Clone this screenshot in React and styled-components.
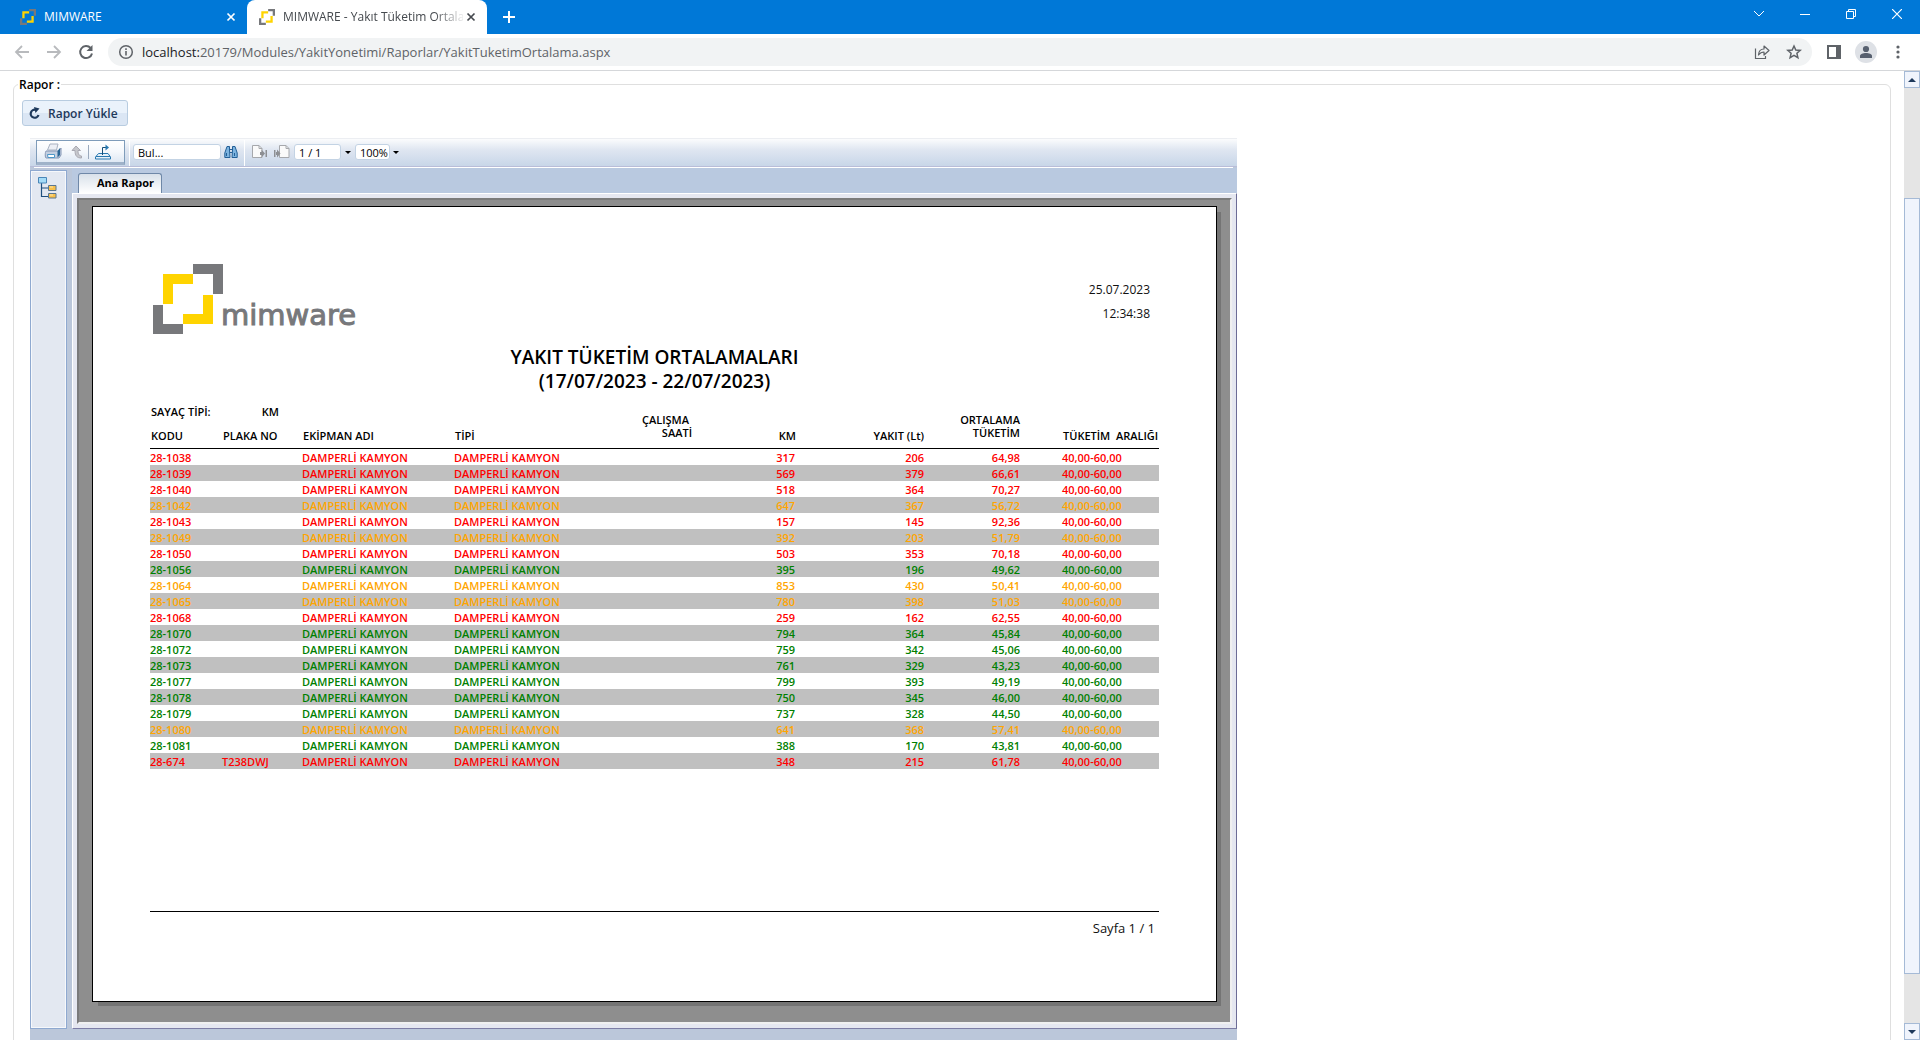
import React from 'react';
import styled, { createGlobalStyle, css } from 'styled-components';

const GlobalStyle = createGlobalStyle`
  * { box-sizing: border-box; }
  html, body { margin: 0; height: 100%; }
  #root { height: 100%; }
  body, button, input, select {
    font-family: "Open Sans", "Noto Sans", "Liberation Sans", sans-serif;
    font-size: 12px;
  }
`;

const Window = styled.div`
  display: flex;
  flex-direction: column;
  height: 100vh;
  overflow: hidden;
  background: #fff;
`;

const BareButton = styled.button`
  display: flex;
  align-items: center;
  justify-content: center;
  flex: none;
  width: ${(p) => p.$w || 16}px;
  height: ${(p) => p.$h || 16}px;
  padding: 0;
  border: 0;
  background: none;
  color: inherit;
`;

/* ---------- browser chrome ---------- */

const TabStrip = styled.header`
  display: flex;
  flex: none;
  height: 34px;
  background: #0078d7;
  color: #fff;
`;

const BrowserTab = styled.div`
  display: flex;
  align-items: center;
  height: 34px;
  padding: 0 8px 0 12px;
  width: 240px;
  ${(p) =>
    p.$active
      ? css`
          background: #fff;
          color: #45494e;
          border-radius: 8px 8px 0 0;
        `
      : css`
          margin-left: 8px;
          width: 239px;
        `}
`;

const BrowserTabTitle = styled.span`
  flex: 1;
  min-width: 0;
  margin: 0 0 0 8px;
  overflow: hidden;
  white-space: nowrap;
  line-height: 16px;
  ${(p) => p.$fade && css`mask-image: linear-gradient(to right, #000 84%, rgba(0, 0, 0, 0.1));`}
`;

const StripSpacer = styled.div`
  flex: 1;
`;

const WindowButtons = styled.div`
  display: flex;
  height: 28px;
`;

const NavBar = styled.nav`
  display: flex;
  align-items: center;
  flex: none;
  height: 37px;
  padding: 4px 6px;
  border-bottom: 1px solid #d5d7da;
  color: #5f6368;
`;

const AddressBar = styled.div`
  display: flex;
  align-items: center;
  flex: 1;
  height: 28px;
  margin: 0 6px;
  padding: 0 2px 0 10px;
  border-radius: 14px;
  background: #f1f3f4;
`;

const Url = styled.span`
  flex: 1;
  margin-left: 8px;
  font-size: 13px;
  line-height: 20px;
  color: #5f6368;
  b { font-weight: 400; color: #202124; }
`;

const Avatar = styled.span`
  display: flex;
  align-items: center;
  justify-content: center;
  width: 22px;
  height: 22px;
  border-radius: 50%;
  background: #dee1e6;
`;

/* ---------- page and scroll bar ---------- */

const Viewport = styled.div`
  display: flex;
  flex: 1;
  min-height: 0;
`;

const Content = styled.main`
  flex: 1;
  min-width: 0;
  overflow: hidden;
  padding: 4px 13px 0;
`;

const ScrollTrack = styled.div`
  display: flex;
  flex-direction: column;
  flex: none;
  width: 16px;
  background: #e5e5e5;
`;

const ScrollArrow = styled(BareButton)`
  width: 16px;
  height: 17px;
  border: 1px solid #a5bad6;
  background: #f0f4fc;
`;

const ScrollGap = styled.div`
  flex: ${(p) => p.$grow};
`;

const ScrollThumb = styled.div`
  flex: 776;
  border: 1px solid #a5bad6;
  background: #f0f4fc;
`;

const ReportSet = styled.fieldset`
  margin: 0;
  min-width: 0;
  height: 1200px;
  padding: 7px 8px 0;
  border: 1px solid #dfdfdf;
  border-radius: 6px;
  legend {
    padding: 2px 1px 0;
    margin-left: -4px;
    font-size: 12px;
    line-height: 16px;
    font-weight: 600;
    color: #000;
  }
`;

const LoadButton = styled.button`
  display: flex;
  align-items: center;
  gap: 8px;
  height: 26px;
  padding: 0 9px 0 5px;
  border: 1px solid #b8cce0;
  border-radius: 3px;
  background: linear-gradient(#eaf2fb 0 48%, #dbe6f4 52% 100%);
  color: #1e395b;
  font-size: 12px;
  font-weight: 600;
`;

/* ---------- report viewer ---------- */

const Viewer = styled.section`
  width: 1207px;
  margin: 12px 0 0 8px;
  height: 1060px;
  background: #bbc7da;
`;

const ViewerToolbar = styled.div`
  display: flex;
  align-items: flex-start;
  height: 29px;
  padding: 1px 6px 0;
  border-top: 1px solid #eceef2;
  border-bottom: 1px solid #b9bdd8;
  background: linear-gradient(#fbfcfd, #dfe6f1 40%, #c8d6e8);
`;

const ExportGroup = styled.div`
  display: flex;
  align-items: center;
  width: 89px;
  height: 25px;
  padding: 0 6px 0 7px;
  border: 1px solid #7f9cba;
  border-bottom: 3px solid #9fb2c9;
  background: linear-gradient(#fff, #f5f8fc 50%, #dfe8f4);
`;

const ToolDivider = styled.span`
  flex: none;
  width: 1px;
  height: ${(p) => p.$h || 26}px;
  margin: ${(p) => p.$m || '0 3px 0 4px'};
  background: ${(p) => p.$color || '#fff'};
`;

const Tool = styled(BareButton)`
  width: ${(p) => p.$w || 18}px;
  height: 20px;
  margin: ${(p) => p.$m || '2px 0 0'};
`;

const ToolInput = styled.input`
  width: ${(p) => p.$w}px;
  height: 16px;
  margin-top: 4px;
  padding: 0 0 0 4px;
  border: 1px solid #c3d3e4;
  border-radius: 3px;
  background: #fff;
  color: #000;
  font-size: 11px;
  line-height: 14px;
  &::placeholder { color: #000; opacity: 1; }
`;

const ViewerBody = styled.div`
  display: flex;
  height: 862px;
  background: linear-gradient(#fff, #fff) 4px 0 / calc(100% - 8px) 1px no-repeat;
`;

const GroupPanel = styled.aside`
  width: 37px;
  margin: 3px 5px 0 0;
  padding: 4px 0 0 5px;
  border: 1px solid #8fa9d0;
  box-shadow: inset 0 0 0 1px #f6f8fb;
  background: #e3e8f1;
`;

const ReportColumn = styled.div`
  display: flex;
  flex-direction: column;
  flex: 1;
  min-width: 0;
  margin-top: 1px;
  background: #b9c9e0;
`;

const ReportTabs = styled.div`
  display: flex;
  align-items: flex-end;
  height: 25px;
  padding-left: 6px;
`;

const ReportTab = styled.button`
  height: 20px;
  padding: 0 7px 2px 18px;
  border: 1px solid #6f88a8;
  border-bottom: 0;
  border-radius: 3px 3px 0 0;
  background: linear-gradient(#d9e1ea, #fff);
  color: #000;
  font-size: 11px;
  line-height: 16px;
  font-weight: 700;
`;

const Frame = styled.div`
  flex: 1;
  padding: 4px;
  border: 1px solid;
  border-color: #fff #6c6c96 #7d7da5 #fff;
  background: #e5e7f0;
`;

const Desk = styled.div`
  height: 100%;
  padding: 6px 13px 0;
  border: 2px solid;
  border-color: #7b7b7b #f0f0f0 #f0f0f0 #7b7b7b;
  background: #8e8e8e;
`;

const Paper = styled.article`
  display: flex;
  flex-direction: column;
  width: 1125px;
  height: 796px;
  padding: 57px 57px 0;
  border: 1px solid #000;
  background: #fff;
  box-shadow: 5px 5px 0 -1px #747474;
`;

const PaperHead = styled.div`
  display: flex;
  justify-content: space-between;
  height: 72px;
  padding: 0 9px 0 3px;
`;

const Logo = styled.div`
  display: flex;
  align-items: flex-end;
  padding-bottom: 2px;
`;

const Wordmark = styled.span`
  margin: 0 0 3px -2px;
  font-family: "DejaVu Sans", sans-serif;
  font-size: 29px;
  line-height: 32px;
  color: #77787b;
  -webkit-text-stroke: 1px #77787b;
`;

const Stamp = styled.div`
  padding-top: 14px;
  text-align: right;
  line-height: 24px;
  color: #111;
`;

const Title = styled.h1`
  margin: 9px 0 0;
  text-align: center;
  font-size: 19px;
  line-height: 24px;
  font-weight: 600;
  color: #000;
`;

const Meter = styled.dl`
  display: flex;
  gap: 51px;
  margin: 12px 0 -6px;
  padding-left: 1px;
  font-size: 11px;
  line-height: 14px;
  font-weight: 600;
  dt, dd { margin: 0; }
`;

const ReportTable = styled.table`
  width: 1009px;
  table-layout: fixed;
  border-collapse: separate;
  border-spacing: 0;
  font-size: 11px;
  line-height: 13px;
  font-weight: 600;
`;

const HeadCell = styled.th`
  padding: 0 0 6px ${(p) => p.$indent || 1}px;
  border-bottom: 1px solid #000;
  vertical-align: bottom;
  text-align: ${(p) => p.$align || 'left'};
  font-weight: 600;
  white-space: pre;
`;

const StackedHead = styled(HeadCell)`
  padding-bottom: 9px;
`;

const StackedLine = styled.span`
  display: block;
  padding-right: ${(p) => p.$shift || 0}px;
`;

const TONES = { red: '#ff0000', orange: '#ffa500', green: '#008000' };

const DataRow = styled.tr`
  height: 16px;
  color: ${(p) => TONES[p.$tone]};
  &:nth-child(even) { background: #c0c0c0; }
`;

const Cell = styled.td`
  padding: 0 ${(p) => p.$end || 0}px 0 ${(p) => p.$indent || 0}px;
  text-align: ${(p) => p.$align || 'left'};
  white-space: nowrap;
`;

const PaperFoot = styled.footer`
  margin-top: 142px;
  padding: 4px 4px 0 0;
  border-top: 1px solid #000;
  text-align: right;
  font-size: 13px;
  line-height: 24px;
  color: #111;
`;

/* ---------- drawings ---------- */

function Mark({ size }) {
  return (
    <svg width={size} height={size} viewBox="0 0 70 70" aria-hidden="true">
      <path fill="#77787b" d="M40 0H70V30H60V10H40Z" />
      <path fill="#ffd400" d="M10 10H40V20H20V40H10Z" />
      <path fill="#ffd400" d="M50 31H60V60H30V50H50Z" />
      <path fill="#77787b" d="M0 41H10V60H30V70H0Z" />
    </svg>
  );
}

function Svg({ w = 16, h = w, children, ...rest }) {
  return (
    <svg width={w} height={h} viewBox={`0 0 ${w} ${h}`} fill="none" stroke="currentColor" aria-hidden="true" {...rest}>
      {children}
    </svg>
  );
}

const CloseIcon = () => (
  <Svg strokeWidth="1.7"><path d="M4.5 4.5l7 7M11.5 4.5l-7 7" /></Svg>
);
const PlusIcon = () => (
  <Svg strokeWidth="2"><path d="M8 2v12M2 8h12" /></Svg>
);
const BackIcon = () => (
  <Svg strokeWidth="1.8" color="#b8babd"><path d="M15 8H2M8 2L2 8l6 6" /></Svg>
);
const ForwardIcon = () => (
  <Svg strokeWidth="1.8" color="#b8babd"><path d="M1 8h13M8 2l6 6-6 6" /></Svg>
);
const ReloadIcon = () => (
  <Svg strokeWidth="2"><path d="M12.6 4A6 6 0 1 0 14 9.5" /><path d="M14.5 1v6h-6z" fill="currentColor" stroke="none" /></Svg>
);
const InfoIcon = () => (
  <Svg strokeWidth="1.5"><circle cx="8" cy="8" r="6.3" /><path d="M8 7v4.5M8 4.3v1.6" strokeWidth="1.6" /></Svg>
);
const ShareIcon = () => (
  <Svg strokeWidth="1.2">
    <path d="M1.5 4.5v10h10V12" />
    <path d="M4.5 11c.2-4 2-6 5.5-6V2l5 4.5-5 4.5V8C7.5 8 6 9 4.5 11z" strokeLinejoin="round" />
  </Svg>
);
const StarIcon = () => (
  <Svg strokeWidth="1.5"><path d="M8 2l1.800 4 4.400.400-3.300 2.900 1 4.300L8 11.300l-3.900 2.300 1-4.300-3.300-2.900 4.400-.400z" /></Svg>
);
const PanelIcon = () => (
  <Svg strokeWidth="2"><rect x="2" y="2" width="12" height="12" /><path d="M10 2h4v12h-4z" fill="currentColor" stroke="none" /></Svg>
);
const PersonIcon = () => (
  <Svg w={14} color="#57606f" fill="currentColor" stroke="none">
    <circle cx="7" cy="4" r="3.1" /><path d="M1 13v-2c0-2 3-3 6-3s6 1 6 3v2z" />
  </Svg>
);
const DotsIcon = () => (
  <Svg fill="currentColor" stroke="none"><circle cx="8" cy="3" r="1.6" /><circle cx="8" cy="8" r="1.6" /><circle cx="8" cy="13" r="1.6" /></Svg>
);
const ChevronIcon = () => (
  <Svg w={12}><path d="M1 3l5 5 5-5" /></Svg>
);
const MinimizeIcon = () => (
  <Svg w={10}><path d="M0 5.5h10" /></Svg>
);
const RestoreIcon = () => (
  <Svg w={10}><path d="M.5 2.5h7v7h-7zM2.5 2.5v-2h7v7h-2" /></Svg>
);
const WindowCloseIcon = () => (
  <Svg w={10}><path d="M0 0l10 10M10 0L0 10" strokeWidth="1.2" /></Svg>
);
const RefreshIcon = () => (
  <Svg w={12} h={13} strokeWidth="2.2"><path d="M7.5 2.8A4 4 0 1 0 10.5 8" /><path d="M6 0l5.500 1.500L7.500 6z" fill="currentColor" stroke="none" /></Svg>
);
const PrintIcon = () => (
  <Svg w={18}>
    <path d="M6 1h8l-1.500 6H3.500z" fill="#eceff5" stroke="#a9b2c2" />
    <path d="M2 8h13l2-3v7l-2 3H2c-1 0-1-6 0-7z" fill="#c3cfe1" stroke="#8496b4" />
    <path d="M13.500 8l2.500-3v7l-2.500 2.500z" fill="#2b6594" stroke="none" />
    <path d="M3.500 11.500h7v3H4z" fill="#fff" stroke="#4c96c8" />
  </Svg>
);
const UpArrowIcon = () => (
  <Svg w={12} h={14}>
    <path d="M5 1l4.500 4.500H7c0 4 1 5 3.500 5.500v2C6 13 4 11 4 5.500H1z" fill="#c6c7cc" stroke="#a9a9b2" />
  </Svg>
);
const ExportIcon = () => (
  <Svg w={18} h={17} stroke="#2878b0">
    <path d="M4.500 10.500L1.500 14v2h15v-2L14 10.500z" fill="#e6f0f9" />
    <path d="M2 13.500h14" />
    <path d="M8.500 12V4.500H12" stroke="#154f78" /><path d="M11.500 1.500l3.500 3-3.500 3z" fill="#2878b0" stroke="none" />
  </Svg>
);
const FindIcon = () => (
  <Svg w={14} stroke="#235f96">
    <path d="M3 1.500h2.500V5L6 12.500H.8V8zM11 1.500H8.500V5L8 12.500h5.200V8z" fill="#7db4e0" />
    <path d="M6 4.500h2M6 7.500h2M2.500 8v3M10.500 8v3" />
  </Svg>
);
const PageIcon = ({ back }) => (
  <Svg w={16} stroke="#a6a8ac">
    <path d={back ? 'M5.500 1.500H12l3 3v9H5.500z' : 'M1.500 1.500H8l3 3v9H1.500z'} fill="#fafafa" />
    <path d={back ? 'M12 1.500v3h3' : 'M8 1.500v3h3'} />
    <path d={back ? 'M0 6h1.500v7H0zM2 8h1V5.500l3.500 4L3 13.500V11H2z' : 'M9 8h1.500V5.500l3.500 4-3.500 4V11H9zM14.500 6H16v7h-1.500z'} fill="#8d8f93" stroke="none" />
  </Svg>
);
const Caret = ({ up, color = '#1e395b' }) => (
  <Svg w={8} h={4} fill={color} stroke="none"><path d={up ? 'M4 0l4 4H0z' : 'M0 0h8L4 4z'} /></Svg>
);
const SmallCaret = () => (
  <Svg w={6} h={3} fill="#000" stroke="none"><path d="M0 0h6L3 3z" /></Svg>
);
const TreeIcon = () => (
  <Svg w={20} h={23}>
    <path d="M4.500 7v13.500H11M4.500 12H11" stroke="#1f4f7f" strokeWidth="1.2" />
    <path d="M1.500 1.500h8v5.500h-8z" fill="#a4dbf7" stroke="#4a86b8" />
    <path d="M11.500 9.500h7.500v5h-7.500zM11.500 17.500h7.500v4.500h-7.500z" fill="#f7bf4a" stroke="#5a7690" />
    <path d="M13 11h3M13 19h3" stroke="#fde6ac" />
  </Svg>
);

/* ---------- data ---------- */

const ROWS = [
  ['28-1038', '', '317', '206', '64,98', 'red'],
  ['28-1039', '', '569', '379', '66,61', 'red'],
  ['28-1040', '', '518', '364', '70,27', 'red'],
  ['28-1042', '', '647', '367', '56,72', 'orange'],
  ['28-1043', '', '157', '145', '92,36', 'red'],
  ['28-1049', '', '392', '203', '51,79', 'orange'],
  ['28-1050', '', '503', '353', '70,18', 'red'],
  ['28-1056', '', '395', '196', '49,62', 'green'],
  ['28-1064', '', '853', '430', '50,41', 'orange'],
  ['28-1065', '', '780', '398', '51,03', 'orange'],
  ['28-1068', '', '259', '162', '62,55', 'red'],
  ['28-1070', '', '794', '364', '45,84', 'green'],
  ['28-1072', '', '759', '342', '45,06', 'green'],
  ['28-1073', '', '761', '329', '43,23', 'green'],
  ['28-1077', '', '799', '393', '49,19', 'green'],
  ['28-1078', '', '750', '345', '46,00', 'green'],
  ['28-1079', '', '737', '328', '44,50', 'green'],
  ['28-1080', '', '641', '368', '57,41', 'orange'],
  ['28-1081', '', '388', '170', '43,81', 'green'],
  ['28-674', 'T238DWJ', '348', '215', '61,78', 'red'],
];

const Col = styled.col`
  width: ${(p) => p.$w}px;
`;
const COLUMNS = [72, 80, 152, 146, 92, 104, 128, 96, 139];

function Report() {
  return (
    <Paper>
      <PaperHead>
        <Logo>
          <Mark size={70} />
          <Wordmark>mimware</Wordmark>
        </Logo>
        <Stamp>
          <div>25.07.2023</div>
          <div>12:34:38</div>
        </Stamp>
      </PaperHead>
      <Title>
        YAKIT TÜKETİM ORTALAMALARI
        <br />
        (17/07/2023 - 22/07/2023)
      </Title>
      <Meter>
        <dt>SAYAÇ TİPİ:</dt>
        <dd>KM</dd>
      </Meter>
      <ReportTable>
        <colgroup>
          {COLUMNS.map((w, i) => <Col key={i} $w={w} />)}
        </colgroup>
        <thead>
          <tr>
            <HeadCell>KODU</HeadCell>
            <HeadCell>PLAKA NO</HeadCell>
            <HeadCell>EKİPMAN ADI</HeadCell>
            <HeadCell>TİPİ</HeadCell>
            <StackedHead $align="right">
              <StackedLine $shift={3}>ÇALIŞMA</StackedLine>
              <StackedLine>SAATİ</StackedLine>
            </StackedHead>
            <HeadCell $align="right">KM</HeadCell>
            <HeadCell $align="right">YAKIT (Lt)</HeadCell>
            <StackedHead $align="right">
              <StackedLine>ORTALAMA</StackedLine>
              <StackedLine>TÜKETİM</StackedLine>
            </StackedHead>
            <HeadCell $indent={43}>{'TÜKETİM  ARALIĞI'}</HeadCell>
          </tr>
        </thead>
        <tbody>
          {ROWS.map(([code, plate, km, fuel, avg, tone]) => (
            <DataRow key={code} $tone={tone}>
              <Cell>{code}</Cell>
              <Cell>{plate}</Cell>
              <Cell>DAMPERLİ KAMYON</Cell>
              <Cell>DAMPERLİ KAMYON</Cell>
              <Cell />
              <Cell $align="right" $end={1}>{km}</Cell>
              <Cell $align="right">{fuel}</Cell>
              <Cell $align="right">{avg}</Cell>
              <Cell $indent={42}>40,00-60,00</Cell>
            </DataRow>
          ))}
        </tbody>
      </ReportTable>
      <PaperFoot>Sayfa 1 / 1</PaperFoot>
    </Paper>
  );
}

export default function App() {
  return (
    <Window>
      <GlobalStyle />
      <TabStrip>
        <BrowserTab>
          <Mark size={16} />
          <BrowserTabTitle>MIMWARE</BrowserTabTitle>
          <BareButton aria-label="Sekmeyi kapat"><CloseIcon /></BareButton>
        </BrowserTab>
        <BrowserTab $active>
          <Mark size={16} />
          <BrowserTabTitle $fade>MIMWARE - Yakıt Tüketim Ortala</BrowserTabTitle>
          <BareButton aria-label="Sekmeyi kapat"><CloseIcon /></BareButton>
        </BrowserTab>
        <BareButton $w={44} $h={34} aria-label="Yeni sekme"><PlusIcon /></BareButton>
        <StripSpacer />
        <WindowButtons>
          <BareButton $w={46} $h={28} aria-label="Sekme ara"><ChevronIcon /></BareButton>
          <BareButton $w={46} $h={28} aria-label="Simge durumuna küçült"><MinimizeIcon /></BareButton>
          <BareButton $w={46} $h={28} aria-label="Önceki boyut"><RestoreIcon /></BareButton>
          <BareButton $w={46} $h={28} aria-label="Kapat"><WindowCloseIcon /></BareButton>
        </WindowButtons>
      </TabStrip>
      <NavBar>
        <BareButton $w={32} $h={28} aria-label="Geri"><BackIcon /></BareButton>
        <BareButton $w={32} $h={28} aria-label="İleri"><ForwardIcon /></BareButton>
        <BareButton $w={32} $h={28} aria-label="Yenile"><ReloadIcon /></BareButton>
        <AddressBar>
          <InfoIcon />
          <Url><b>localhost:</b>20179/Modules/YakitYonetimi/Raporlar/YakitTuketimOrtalama.aspx</Url>
          <BareButton $w={32} $h={28} aria-label="Paylaş"><ShareIcon /></BareButton>
          <BareButton $w={32} $h={28} aria-label="Yer işareti"><StarIcon /></BareButton>
        </AddressBar>
        <BareButton $w={32} $h={28} aria-label="Yan panel"><PanelIcon /></BareButton>
        <BareButton $w={32} $h={28} aria-label="Profil"><Avatar><PersonIcon /></Avatar></BareButton>
        <BareButton $w={32} $h={28} aria-label="Menü"><DotsIcon /></BareButton>
      </NavBar>
      <Viewport>
        <Content>
          <ReportSet>
            <legend>Rapor :</legend>
            <LoadButton type="button"><RefreshIcon />Rapor Yükle</LoadButton>
            <Viewer>
              <ViewerToolbar>
                <ExportGroup>
                  <Tool $m="0" aria-label="Yazdır"><PrintIcon /></Tool>
                  <Tool $w={14} $m="0 0 0 8px" aria-label="Üst rapor"><UpArrowIcon /></Tool>
                  <ToolDivider $h={14} $m="0 5px 0 4px" $color="#9aa9bd" />
                  <Tool $m="0" aria-label="Dışa aktar"><ExportIcon /></Tool>
                </ExportGroup>
                <ToolDivider />
                <ToolInput $w={88} placeholder="Bul..." aria-label="Bul" />
                <Tool $m="2px 0 0 1px" aria-label="Ara"><FindIcon /></Tool>
                <ToolDivider />
                <Tool $w={20} $m="2px 0 0 1px" aria-label="Önceki sayfa"><PageIcon /></Tool>
                <Tool $w={20} $m="2px 2px 0 3px" aria-label="Sonraki sayfa"><PageIcon back /></Tool>
                <ToolInput $w={47} defaultValue="1 / 1" aria-label="Sayfa" />
                <Tool $w={14} aria-label="Sayfa seç"><SmallCaret /></Tool>
                <ToolInput $w={35} defaultValue="100%" aria-label="Yakınlaştırma" />
                <Tool $w={12} aria-label="Yakınlaştırma seç"><SmallCaret /></Tool>
              </ViewerToolbar>
              <ViewerBody>
                <GroupPanel>
                  <BareButton $w={22} $h={24} aria-label="Grup ağacı"><TreeIcon /></BareButton>
                </GroupPanel>
                <ReportColumn>
                  <ReportTabs>
                    <ReportTab type="button">Ana Rapor</ReportTab>
                  </ReportTabs>
                  <Frame>
                    <Desk>
                      <Report />
                    </Desk>
                  </Frame>
                </ReportColumn>
              </ViewerBody>
            </Viewer>
          </ReportSet>
        </Content>
        <ScrollTrack>
          <ScrollArrow aria-label="Yukarı kaydır"><Caret up /></ScrollArrow>
          <ScrollGap $grow={110} />
          <ScrollThumb />
          <ScrollGap $grow={49} />
          <ScrollArrow aria-label="Aşağı kaydır"><Caret /></ScrollArrow>
        </ScrollTrack>
      </Viewport>
    </Window>
  );
}
